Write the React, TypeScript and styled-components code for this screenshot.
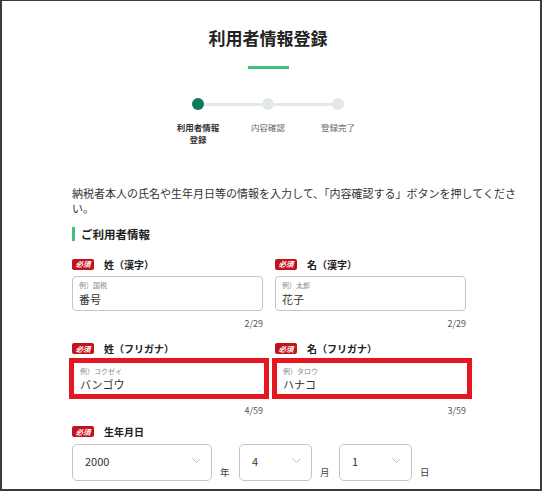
import styled, { createGlobalStyle } from "styled-components"

const GlobalStyle = createGlobalStyle`
    body {
        margin: 0;
        background: #fff;
        font-family: "Noto Sans CJK JP", "Noto Sans", sans-serif;
        color: #333;
    }
`

const steps = [
    { label: "利用者情報登録", active: true },
    { label: "内容確認", active: false },
    { label: "登録完了", active: false },
]

type FieldData = { label: string; hint: string; value: string; count: string; marked?: boolean }

const nameFields: FieldData[] = [
    { label: "姓（漢字）", hint: "例）国税", value: "番号", count: "2/29" },
    { label: "名（漢字）", hint: "例）太郎", value: "花子", count: "2/29" },
    { label: "姓（フリガナ）", hint: "例）コクゼイ", value: "バンゴウ", count: "4/59", marked: true },
    { label: "名（フリガナ）", hint: "例）タロウ", value: "ハナコ", count: "3/59", marked: true },
]

const dateParts = [
    { value: "2000", unit: "年", wide: true },
    { value: "4", unit: "月", wide: false },
    { value: "1", unit: "日", wide: false },
]

function Chevron() {
    return (
        <svg width="9" height="5" viewBox="0 0 9 5">
            <polyline points="0.5,0.5 4.5,4.5 8.5,0.5" fill="none" stroke="#bdbdbd" strokeWidth="1" />
        </svg>
    )
}

function Required() {
    return <Badge>必須</Badge>
}

export default function App() {
    return (
        <>
            <GlobalStyle />
            <Frame>
                <Header>
                    <Title>利用者情報登録</Title>
                    <Accent />
                    <Track>
                        {steps.map((s, i) => (
                            <TrackPart key={s.label}>
                                {i > 0 && <Connector />}
                                <Dot $active={s.active} />
                            </TrackPart>
                        ))}
                    </Track>
                    <StepLabels>
                        {steps.map((s) => (
                            <StepLabel key={s.label} $active={s.active}>{s.label}</StepLabel>
                        ))}
                    </StepLabels>
                </Header>

                <Content>
                    <Lead>納税者本人の氏名や生年月日等の情報を入力して、「内容確認する」ボタンを押してください。</Lead>
                    <SectionTitle>ご利用者情報</SectionTitle>

                    <FieldGrid>
                        {nameFields.map((f) => (
                            <Field key={f.label}>
                                <LabelRow>
                                    <Required />
                                    <LabelText>{f.label}</LabelText>
                                </LabelRow>
                                <InputBox $marked={f.marked}>
                                    <Hint>{f.hint}</Hint>
                                    <Value>{f.value}</Value>
                                </InputBox>
                                <Counter $marked={f.marked}>{f.count}</Counter>
                            </Field>
                        ))}
                    </FieldGrid>

                    <LabelRow>
                        <Required />
                        <LabelText>生年月日</LabelText>
                    </LabelRow>
                    <DateRow>
                        {dateParts.map((d) => (
                            <DatePart key={d.unit}>
                                <Select $wide={d.wide}>
                                    <span>{d.value}</span>
                                    <Chevron />
                                </Select>
                                <Unit>{d.unit}</Unit>
                            </DatePart>
                        ))}
                    </DateRow>
                </Content>
            </Frame>
        </>
    )
}

const Frame = styled.div`
    box-sizing: border-box;
    width: 542px;
    height: 491px;
    border: 2px solid #3b3b3b;
    border-top-width: 1px;
    overflow: hidden;
    background: #fff;
`

const Header = styled.div`
    display: flex;
    flex-direction: column;
    align-items: center;
    padding-right: 6px;
`

const Title = styled.h1`
    margin: 25px 0 0;
    font-size: 17px;
    line-height: 24px;
    font-weight: 700;
    color: #222;
`

const Accent = styled.div`
    width: 41px;
    height: 3px;
    margin-top: 16px;
    background: #3cc47c;
`

const Track = styled.div`
    display: flex;
    align-items: center;
    margin-top: 29px;
`

const TrackPart = styled.div`
    display: flex;
    align-items: center;
`

const Connector = styled.div`
    width: 58px;
    height: 3px;
    background: #e3e9e7;
`

const Dot = styled.div<{ $active?: boolean }>`
    width: 12px;
    height: 12px;
    border-radius: 50%;
    background: ${(p) => (p.$active ? "#0b7b5b" : "#e1e8e6")};
`

const StepLabels = styled.div`
    display: flex;
    margin-top: 11px;
`

const StepLabel = styled.div<{ $active?: boolean }>`
    width: 70px;
    padding: 0 12px;
    box-sizing: border-box;
    text-align: center;
    font-size: 8.5px;
    line-height: 12px;
    font-weight: ${(p) => (p.$active ? 700 : 400)};
    color: ${(p) => (p.$active ? "#333" : "#666")};
`

const Content = styled.div`
    padding-left: 70px;
    width: 458px;
`

const Lead = styled.p`
    margin: 41px 0 0;
    font-size: 11px;
    line-height: 15px;
    color: #333;
`

const SectionTitle = styled.h2`
    display: flex;
    align-items: center;
    margin: 10px 0 0;
    font-size: 11.5px;
    line-height: 16px;
    font-weight: 700;
    color: #222;

    &::before {
        content: "";
        width: 3px;
        height: 14px;
        margin-right: 6px;
        background: #3cc47c;
    }
`

const FieldGrid = styled.div`
    display: grid;
    grid-template-columns: 191px 191px;
    column-gap: 12px;
    row-gap: 13px;
    margin-top: 16px;
    margin-bottom: 9px;
`

const Field = styled.div`
    display: flex;
    flex-direction: column;
`

const LabelRow = styled.div`
    display: flex;
    align-items: center;
    gap: 10px;
    height: 12px;
`

const Badge = styled.span`
    display: inline-flex;
    align-items: center;
    justify-content: center;
    width: 22px;
    height: 11px;
    border-radius: 2px;
    background: #c3121b;
    color: #fff;
    font-size: 7.5px;
    font-weight: 700;
    font-style: italic;
    line-height: 1;
`

const LabelText = styled.span`
    font-size: 10px;
    font-weight: 700;
    color: #222;
`

const InputBox = styled.div<{ $marked?: boolean }>`
    box-sizing: border-box;
    display: flex;
    flex-direction: column;
    height: 35px;
    width: ${(p) => (p.$marked ? "calc(100% + 3px)" : "100%")};
    margin-top: 6px;
    padding: ${(p) => (p.$marked ? "5px 6px 0 7px" : "4px 6px 0")};
    border: 1px solid ${(p) => (p.$marked ? "transparent" : "#c6c6c6")};
    border-radius: ${(p) => (p.$marked ? "0" : "4px")};
    outline: ${(p) => (p.$marked ? "5px solid #e5161f" : "none")};
    outline-offset: -2px;
`

const Hint = styled.span`
    font-size: 7px;
    line-height: 9px;
    color: #8a8a8a;
`

const Value = styled.span`
    margin-top: 1.5px;
    font-size: 11px;
    line-height: 14px;
    color: #333;
`

const Counter = styled.div<{ $marked?: boolean }>`
    margin-top: ${(p) => (p.$marked ? "9px" : "6.5px")};
    text-align: right;
    font-size: 9px;
    line-height: 12px;
    color: #555;
`

const DateRow = styled.div`
    display: flex;
    gap: 10px;
    margin-top: 6px;
`

const DatePart = styled.div`
    display: flex;
    align-items: flex-end;
    gap: 8px;
`

const Select = styled.div<{ $wide?: boolean }>`
    box-sizing: border-box;
    display: flex;
    align-items: center;
    justify-content: space-between;
    width: ${(p) => (p.$wide ? "140px" : "73px")};
    height: 37px;
    padding: 0 10px 2px 12px;
    border: 1px solid #c6c6c6;
    border-radius: 5px;
    font-size: 11px;
    color: #333;

    svg {
        margin-top: -2px;
    }
`

const Unit = styled.span`
    width: 9px;
    padding-bottom: 2px;
    font-size: 9.5px;
    line-height: 14px;
    color: #444;
`
